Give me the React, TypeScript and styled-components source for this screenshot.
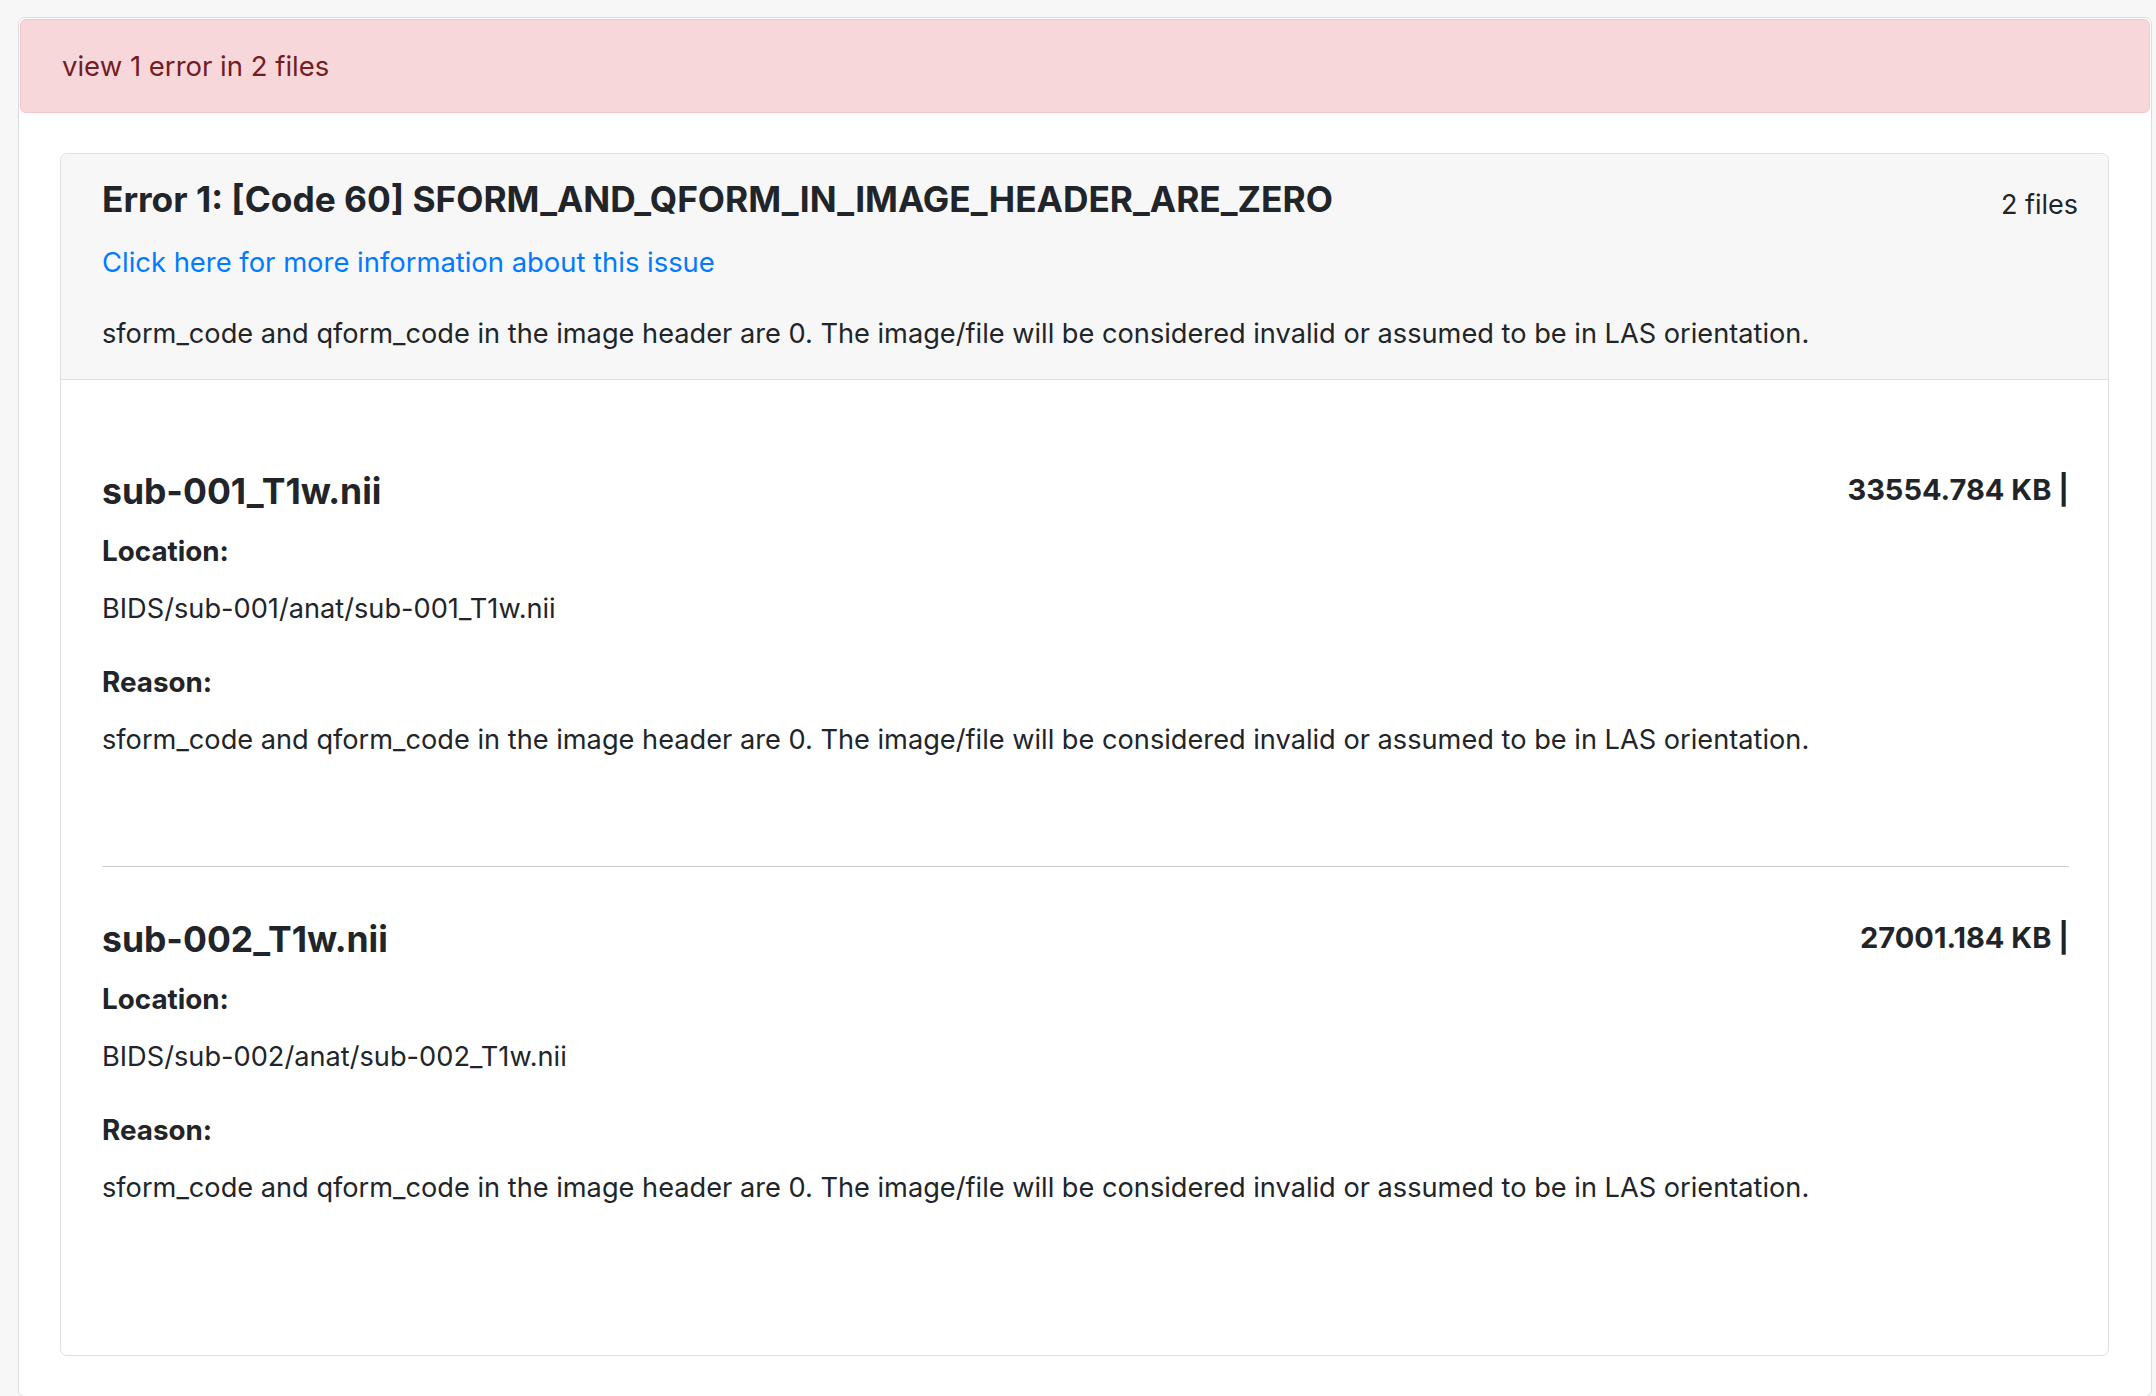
import * as React from "react";
import styled, { createGlobalStyle } from "styled-components";

const GlobalStyle = createGlobalStyle`
  body {
    margin: 0;
    background: #f7f7f7;
    color: #212529;
    font-family: Inter, "Liberation Sans", sans-serif;
  }
`;

const reasonText =
  "sform_code and qform_code in the image header are 0. The image/file will be considered invalid or assumed to be in LAS orientation.";

const files = [
  {
    name: "sub-001_T1w.nii",
    size: "33554.784 KB |",
    location: "BIDS/sub-001/anat/sub-001_T1w.nii",
  },
  {
    name: "sub-002_T1w.nii",
    size: "27001.184 KB |",
    location: "BIDS/sub-002/anat/sub-002_T1w.nii",
  },
];

const App: React.FC = () => {
  return (
    <Page>
      <GlobalStyle />
      <Panel>
        <Alert>view 1 error in 2 files</Alert>
        <Content>
          <Card>
            <CardHeader>
              <HeaderRow>
                <ErrorTitle>
                  Error 1: [Code 60] SFORM_AND_QFORM_IN_IMAGE_HEADER_ARE_ZERO
                </ErrorTitle>
                <FileCount>2 files</FileCount>
              </HeaderRow>
              <InfoLink href="#">
                Click here for more information about this issue
              </InfoLink>
              <HeaderText>{reasonText}</HeaderText>
            </CardHeader>
            <CardBody>
              {files.map((f, i) => (
                <React.Fragment key={f.name}>
                  {i > 0 && <Divider />}
                  <FileItem>
                    <FileRow>
                      <FileName>{f.name}</FileName>
                      <FileSize>{f.size}</FileSize>
                    </FileRow>
                    <Label>Location:</Label>
                    <Value>{f.location}</Value>
                    <Label $gap>Reason:</Label>
                    <Value>{reasonText}</Value>
                  </FileItem>
                </React.Fragment>
              ))}
            </CardBody>
          </Card>
        </Content>
      </Panel>
    </Page>
  );
};

const Page = styled.div`
  padding: 17px 4px 2px 18px;
`;

const Panel = styled.div`
  background: #fff;
  border: 1px solid #dcdcdc;
  border-radius: 7px;
  padding: 1px 1px 40px 1px;
`;

const Alert = styled.div`
  height: 92px;
  display: flex;
  align-items: center;
  padding: 0 41px;
  background: #f8d7da;
  border: 1px solid #f5c6cb;
  border-radius: 6px;
  color: #721c24;
  font-size: 27.5px;
`;

const Content = styled.div`
  padding: 40px 41px 0 40px;
`;

const Card = styled.div`
  border: 1px solid #dfdfdf;
  border-radius: 7px;
  overflow: hidden;
`;

const CardHeader = styled.div`
  background: #f7f7f7;
  border-bottom: 1px solid #dfdfdf;
  padding: 26px 30px 25px 41px;
`;

const HeaderRow = styled.div`
  display: flex;
  justify-content: space-between;
  align-items: flex-start;
`;

const ErrorTitle = styled.h5`
  margin: 0;
  font-size: 35.3px;
  font-weight: 700;
  line-height: 40px;
`;

const FileCount = styled.span`
  font-size: 27px;
  line-height: 40px;
  padding-top: 5px;
`;

const InfoLink = styled.a`
  display: block;
  margin-top: 17px;
  color: #007bff;
  text-decoration: none;
  font-size: 27.4px;
  line-height: 40px;
`;

const HeaderText = styled.p`
  margin: 32px 0 0;
  font-size: 27.2px;
  line-height: 40px;
`;

const CardBody = styled.div`
  padding: 39px 39px 41px 41px;
`;

const Divider = styled.hr`
  margin: 0;
  border: 0;
  border-top: 1px solid #cfcfcf;
`;

const FileItem = styled.div`
  padding: 51px 0 106px;
`;

const FileRow = styled.div`
  display: flex;
  justify-content: space-between;
  align-items: flex-start;
`;

const FileName = styled.h4`
  margin: 0;
  font-size: 35.5px;
  font-weight: 700;
  line-height: 44px;
`;

const FileSize = styled.span`
  font-size: 29px;
  font-weight: 700;
  line-height: 40px;
`;

const Label = styled.div<{ $gap?: boolean }>`
  margin-top: ${(p) => (p.$gap ? "33px" : "17px")};
  font-size: 27.8px;
  font-weight: 700;
  line-height: 40px;
`;

const Value = styled.div`
  margin-top: 18px;
  font-size: 27.2px;
  line-height: 40px;
`;

export default App;
